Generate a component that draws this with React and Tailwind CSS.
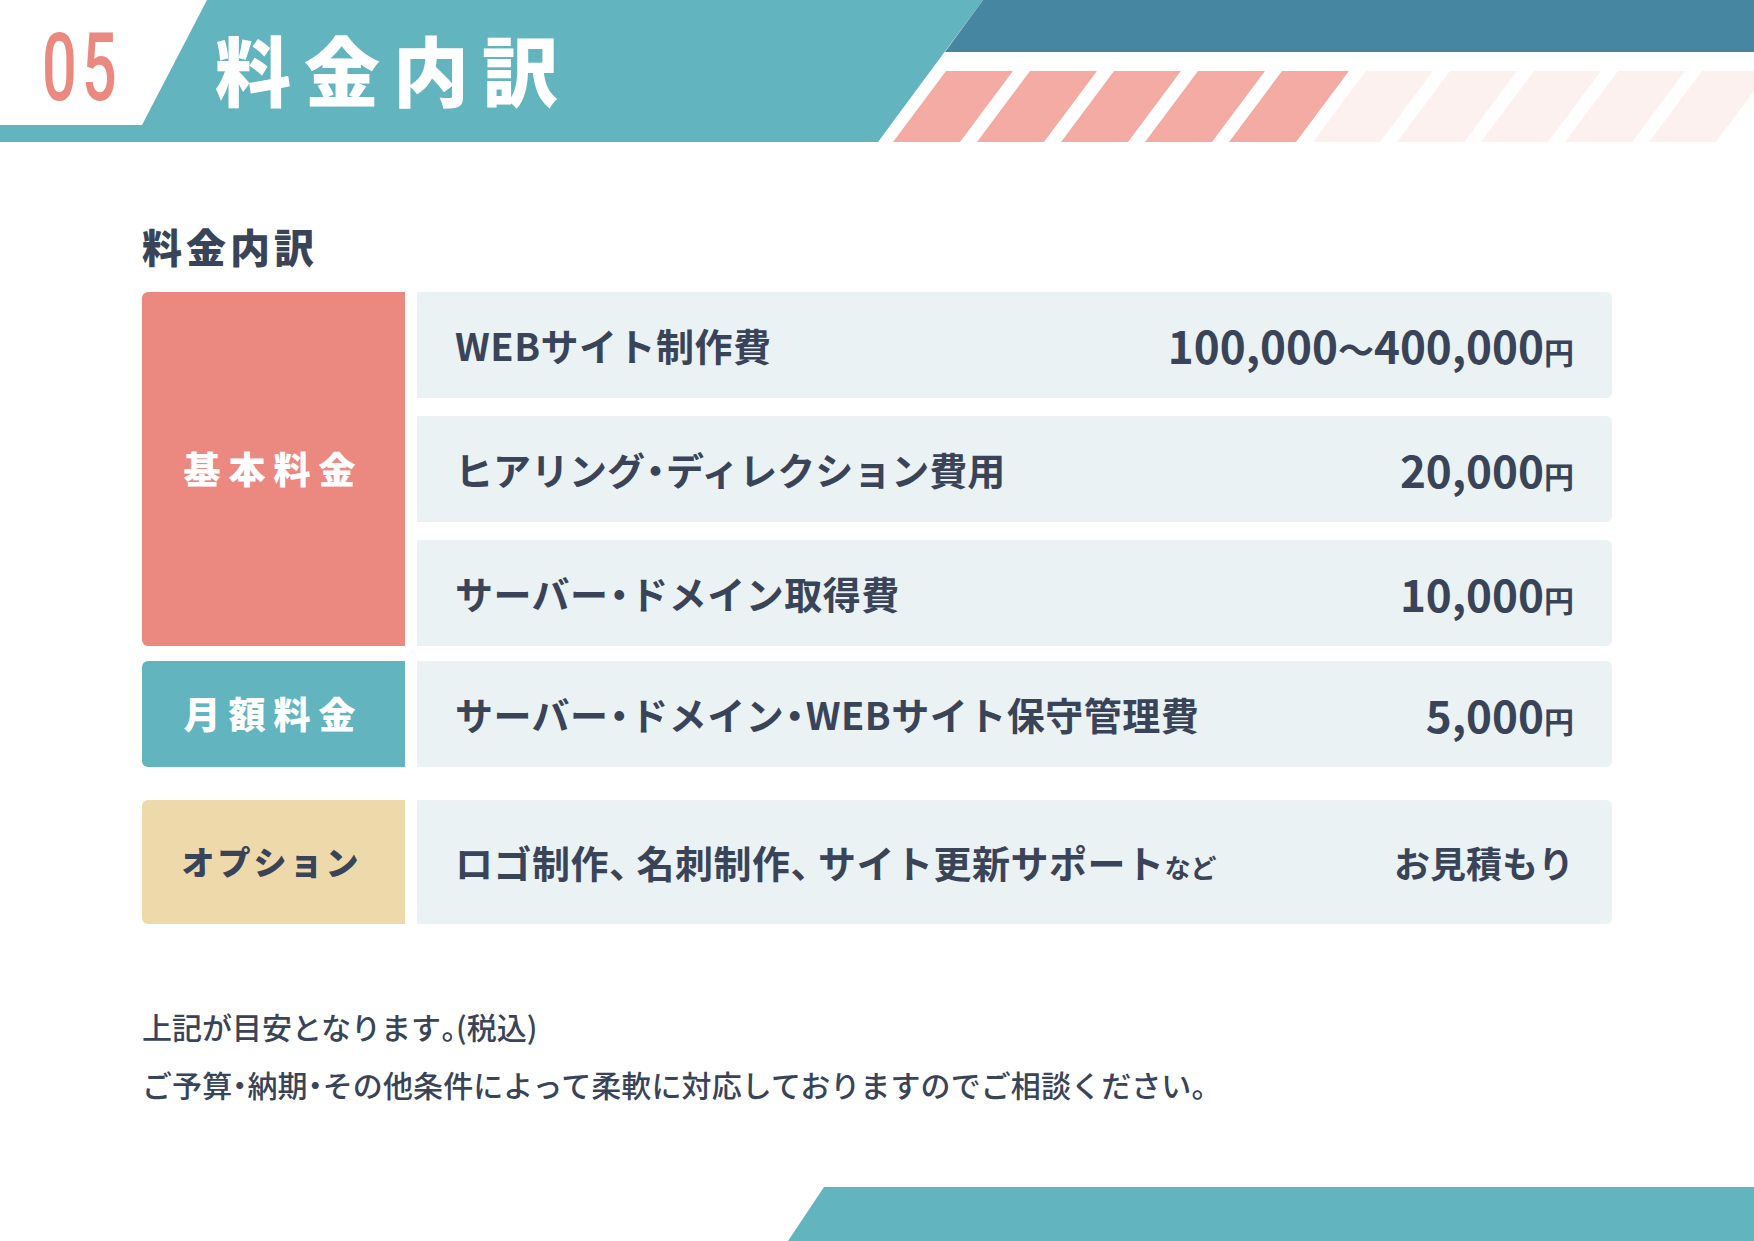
import React from "react"

// proportional punctuation, narrower like the reference's
const Palt = ({ children, className = "" }) => (
  <span className={`[font-feature-settings:'palt'] ${className}`}>{children}</span>
)
const Dot = () => <Palt className="mx-[1px]">・</Palt>

const feeRows = [
  { name: <>WEBサイト制作費</>, price: <>100,000<span className="text-[36px]">〜</span>400,000</>, unit: "円" },
  { name: <>ヒアリング<Dot />ディレクション費用</>, price: "20,000", unit: "円", track: "tracking-normal" },
  { name: <>サーバー<Dot />ドメイン取得費</>, price: "10,000", unit: "円" },
]

const HeaderArt = () => (
  <svg className="absolute inset-0" width="1754" height="142" viewBox="0 0 1754 142">
    <polygon points="207,0 983,0 878,142 0,142 0,125 142,125" fill="#62b5bf" />
    <polygon points="983,0 1754,0 1754,52 945,52" fill="#4786a1" />
    {Array.from({ length: 10 }).map((_, i) => {
      const x = 946 + 84 * i
      return (
        <polygon
          key={i}
          points={`${x},71 ${x + 67},71 ${x + 14},142 ${x - 53},142`}
          fill={i < 5 ? "#f3aba4" : "#fdf1ef"}
        />
      )
    })}
  </svg>
)

const FeeRow = ({ name, price, unit, small, tall, track = "tracking-[0.5px]" }) => (
  <div
    className={`flex items-center justify-between bg-[#eaf2f4] rounded-r-md px-[38px] ${
      tall ? "h-[124px]" : "h-[106px]"
    }`}
  >
    <span className={`text-[38px] font-bold leading-none ${track}`}>
      {name}
      {small && <span className="text-[26px] tracking-normal">{small}</span>}
    </span>
    <span className="flex items-baseline leading-none font-bold">
      <span className={unit ? "text-[44px]" : "text-[36px]"}>{price}</span>
      {unit && <span className="text-[30px]">{unit}</span>}
    </span>
  </div>
)

export default function App() {
  return (
    <div className="w-[1754px] h-[1241px] bg-white flex flex-col overflow-hidden text-[#3a4459] font-['Noto_Sans_CJK_JP',sans-serif]">
      <header className="relative h-[142px] shrink-0">
        <HeaderArt />
        <div className="relative flex items-center h-[136px]">
          <div className="w-[215px] shrink-0 pl-[42px]">
            <span className="inline-block origin-left scale-x-[0.65] font-['Roboto',sans-serif] font-medium text-[94px] leading-none tracking-[8px] text-[#eb8880]">
              05
            </span>
          </div>
          <h1 className="text-white font-black text-[76px] leading-none tracking-[13px]">料金内訳</h1>
        </div>
      </header>

      <main className="px-[142px]">
        <h2 className="mt-[84px] mb-[26px] text-[40px] font-black leading-none tracking-[4px]">料金内訳</h2>

        <div className="flex gap-[12px]">
          <div className="w-[263px] shrink-0 flex items-center justify-center bg-[#eb8880] rounded-l-md text-white text-[37px] font-black tracking-[8px]">
            基本料金
          </div>
          <div className="flex-1 flex flex-col gap-[18px]">
            {feeRows.map((r, i) => (
              <FeeRow key={i} {...r} />
            ))}
          </div>
        </div>

        <div className="flex gap-[12px] mt-[15px]">
          <div className="w-[263px] shrink-0 flex items-center justify-center bg-[#62b5bf] rounded-l-md text-white text-[37px] font-black tracking-[8px]">
            月額料金
          </div>
          <div className="flex-1">
            <FeeRow
              name={<>サーバー<Dot />ドメイン<Dot />WEBサイト保守管理費</>}
              price="5,000"
              unit="円"
            />
          </div>
        </div>

        <div className="flex gap-[12px] mt-[33px]">
          <div className="w-[263px] shrink-0 flex items-center justify-center bg-[#eed9ab] rounded-l-md text-[33px] font-black tracking-[3px] pr-[4px]">
            オプション
          </div>
          <div className="flex-1">
            <FeeRow
              name={<>ロゴ制作<Palt className="mr-[8px]">、</Palt>名刺制作<Palt className="mr-[8px]">、</Palt>サイト更新サポート</>}
              small="など"
              price="お見積もり"
              tall
            />
          </div>
        </div>

        <div className="mt-[87px] flex flex-col gap-[28px] text-[30px] font-medium leading-none">
          <p>上記が目安となります<Palt>。</Palt>(税込)</p>
          <p className="tracking-[0.1px]">
            ご予算<Palt>・</Palt>納期<Palt>・</Palt>その他条件によって柔軟に対応しておりますのでご相談ください。
          </p>
        </div>
      </main>

      <div className="mt-auto ml-[788px] h-[54px] shrink-0 bg-[#62b5bf] [clip-path:polygon(36px_0,100%_0,100%_100%,0_100%)]" />
    </div>
  )
}
